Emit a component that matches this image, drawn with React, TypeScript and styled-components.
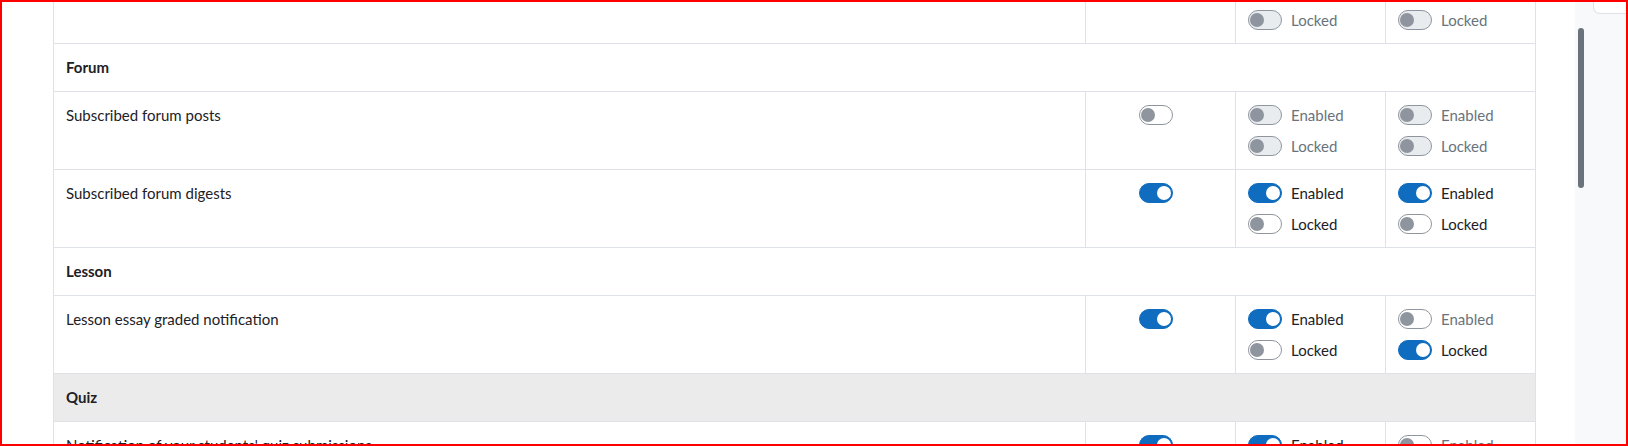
import React from 'react'
import styled, { createGlobalStyle } from 'styled-components'

type Look = 'on' | 'off' | 'disabled' | 'muted'

interface Processor {
	enabled: Look
	locked: Look
}

interface Setting {
	kind: 'setting'
	label: string
	online: Look
	processors: Processor[]
}

interface Category {
	kind: 'category'
	name: string
	hovered?: boolean
}

type Item = Setting | Category

const items: Item[] = [
	{
		kind: 'setting',
		label: 'Feedback reminder',
		online: 'off',
		processors: [
			{ enabled: 'disabled', locked: 'disabled' },
			{ enabled: 'disabled', locked: 'disabled' },
		],
	},
	{ kind: 'category', name: 'Forum' },
	{
		kind: 'setting',
		label: 'Subscribed forum posts',
		online: 'off',
		processors: [
			{ enabled: 'disabled', locked: 'disabled' },
			{ enabled: 'disabled', locked: 'disabled' },
		],
	},
	{
		kind: 'setting',
		label: 'Subscribed forum digests',
		online: 'on',
		processors: [
			{ enabled: 'on', locked: 'off' },
			{ enabled: 'on', locked: 'off' },
		],
	},
	{ kind: 'category', name: 'Lesson' },
	{
		kind: 'setting',
		label: 'Lesson essay graded notification',
		online: 'on',
		processors: [
			{ enabled: 'on', locked: 'off' },
			{ enabled: 'muted', locked: 'on' },
		],
	},
	{ kind: 'category', name: 'Quiz', hovered: true },
	{
		kind: 'setting',
		label: "Notification of your students' quiz submissions",
		online: 'on',
		processors: [
			{ enabled: 'on', locked: 'off' },
			{ enabled: 'muted', locked: 'on' },
		],
	},
]

const GlobalStyle = createGlobalStyle`
	html, body {
		margin: 0;
		padding: 0;
		background: #fff;
	}
	body {
		font-family: 'Segoe UI', Lato, 'Noto Sans', sans-serif;
		font-size: 15px;
		color: #1d2125;
	}
`

const Switch: React.FunctionComponent<{ look: Look; label?: string }> = props => (
	<SwitchLine>
		<Track look={props.look} role="switch" aria-checked={props.look === 'on'} />
		{props.label && <SwitchLabel look={props.look}>{props.label}</SwitchLabel>}
	</SwitchLine>
)

const SettingRow: React.FunctionComponent<{ setting: Setting }> = ({ setting }) => (
	<tr>
		<LabelCell>{setting.label}</LabelCell>
		<OnlineCell>
			<Centered>
				<Switch look={setting.online} />
			</Centered>
		</OnlineCell>
		{setting.processors.map((processor, index) => (
			<ProcessorCell key={index}>
				<SwitchStack>
					<Switch look={processor.enabled} label="Enabled" />
					<Switch look={processor.locked} label="Locked" />
				</SwitchStack>
			</ProcessorCell>
		))}
	</tr>
)

export default function App() {
	return (
		<>
			<GlobalStyle />
			<Frame>
				<Main>
					<PreferencesTable>
						<colgroup>
							<col />
							<col width={150} />
							<col width={150} />
							<col width={150} />
						</colgroup>
						<tbody>
							{items.map((item, index) =>
								item.kind === 'category' ? (
									<tr key={index}>
										<CategoryCell colSpan={4} hovered={item.hovered}>
											{item.name}
										</CategoryCell>
									</tr>
								) : (
									<SettingRow key={index} setting={item} />
								)
							)}
						</tbody>
					</PreferencesTable>
				</Main>
				<SidePanel>
					<CornerTab />
					<ScrollThumb />
				</SidePanel>
			</Frame>
		</>
	)
}

const Frame = styled.div`
	width: 1628px;
	height: 446px;
	box-sizing: border-box;
	border: 2px solid #ff0000;
	display: flex;
	overflow: hidden;
`

const Main = styled.div`
	flex: 1;
	background: #fff;
	overflow: hidden;
`

const SidePanel = styled.div`
	width: 51px;
	background: #f8f9fa;
	display: flex;
	flex-direction: column;
`

const CornerTab = styled.div`
	align-self: flex-end;
	width: 33px;
	height: 12px;
	box-sizing: border-box;
	background: #fff;
	border-left: 1px solid #dee2e6;
	border-bottom: 1px solid #dee2e6;
	border-bottom-left-radius: 7px;
`

const ScrollThumb = styled.div`
	width: 6px;
	height: 160px;
	margin: 14px 0 0 3px;
	border-radius: 3px;
	background: #6a737b;
`

const PreferencesTable = styled.table`
	margin: -37px 0 0 51px;
	width: 1483px;
	table-layout: fixed;
	border-collapse: collapse;
`

const Cell = styled.td`
	border: 1px solid #dee2e6;
	vertical-align: top;
	padding: 11px 12px;
	line-height: 24px;
`

const LabelCell = styled(Cell)``

const OnlineCell = styled(Cell)``

const ProcessorCell = styled(Cell)``

const CategoryCell = styled.td<{ hovered?: boolean }>`
	border: 1px solid #dee2e6;
	padding: 12px;
	line-height: 23px;
	font-weight: 700;
	background: ${props => (props.hovered ? '#ebebeb' : '#fff')};
`

const Centered = styled.div`
	display: flex;
	justify-content: center;
`

const SwitchStack = styled.div`
	display: flex;
	flex-direction: column;
	gap: 7px;
`

const SwitchLine = styled.div`
	display: flex;
	align-items: center;
	height: 24px;
`

const Track = styled.span<{ look: Look }>`
	position: relative;
	flex-shrink: 0;
	width: 34px;
	height: 20px;
	box-sizing: border-box;
	margin-right: 9px;
	border-radius: 10px;
	border: 1px solid ${props => (props.look === 'on' ? '#0f6cbf' : '#8f959e')};
	background: ${props =>
		props.look === 'on' ? '#0f6cbf' : props.look === 'disabled' ? '#e9ecef' : '#fff'};

	&::after {
		content: '';
		position: absolute;
		top: 2px;
		left: ${props => (props.look === 'on' ? '17px' : '1px')};
		width: 14px;
		height: 14px;
		border-radius: 50%;
		background: ${props => (props.look === 'on' ? '#fff' : '#8f959e')};
	}
`

const SwitchLabel = styled.span<{ look: Look }>`
	color: ${props => (props.look === 'disabled' || props.look === 'muted' ? '#6a737b' : '#1d2125')};
	white-space: nowrap;
`
